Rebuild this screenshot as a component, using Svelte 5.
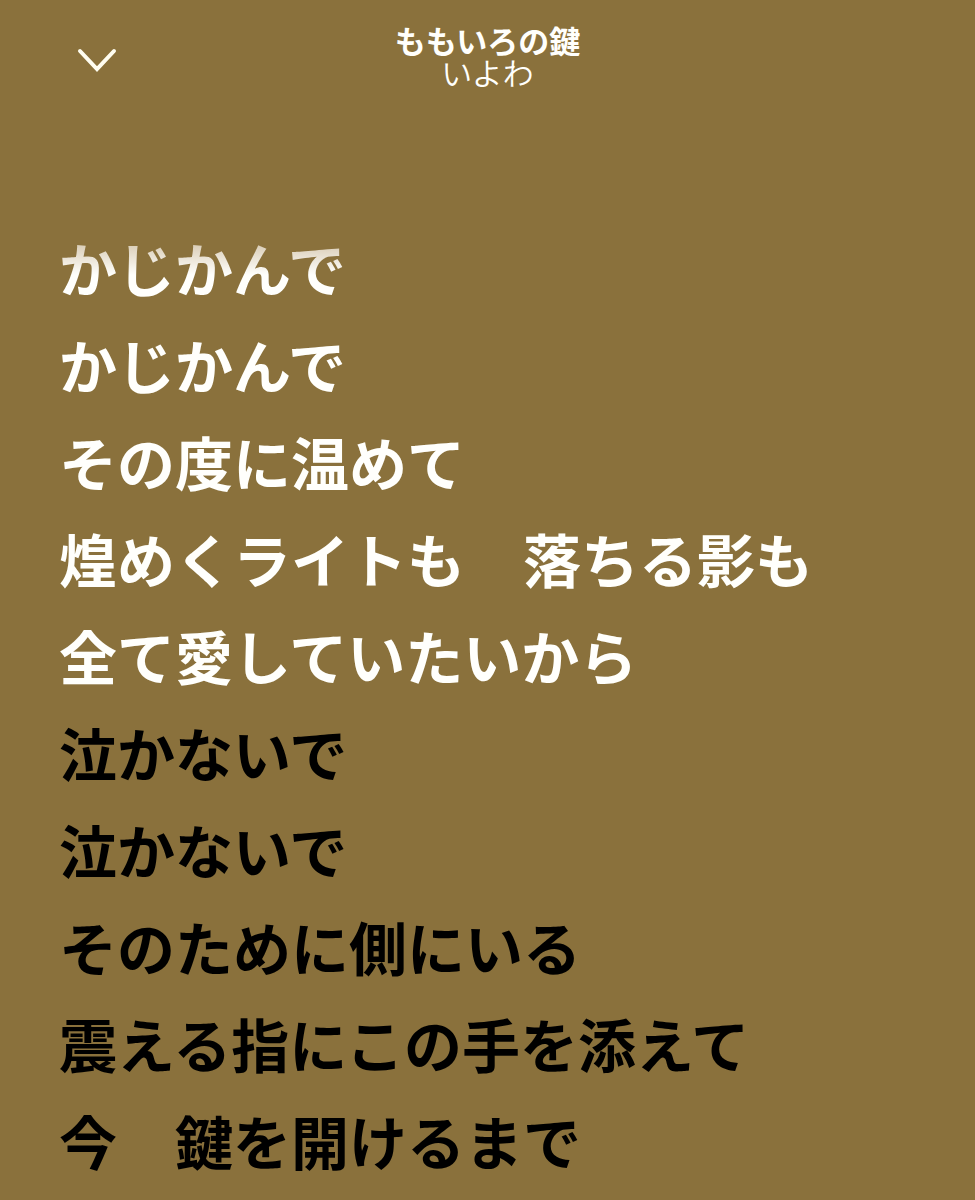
<script lang="ts">
  const title = 'ももいろの鍵';
  const artist = 'いよわ';

  const sung = [
    'かじかんで',
    'かじかんで',
    'その度に温めて',
    '煌めくライトも　落ちる影も',
    '全て愛していたいから',
  ];

  const upcoming = [
    '泣かないで',
    '泣かないで',
    'そのために側にいる',
    '震える指にこの手を添えて',
    '今　鍵を開けるまで',
  ];
</script>

<div class="lyrics-page">
  <header>
    <button class="close" aria-label="閉じる">
      <svg viewBox="0 0 40 24" width="40" height="24" aria-hidden="true">
        <path d="M3 3 L20 21 L37 3" />
      </svg>
    </button>
    <div class="track">
      <h1>{title}</h1>
      <p>{artist}</p>
    </div>
  </header>

  <main>
    {#each sung as line}
      <p class="line sung">{line}</p>
    {/each}
    {#each upcoming as line}
      <p class="line">{line}</p>
    {/each}
  </main>
</div>

<style>
  :global(body) {
    margin: 0;
    background-color: #8a713c;
  }

  .lyrics-page {
    height: 100vh;
    overflow: hidden;
    font-family: "Noto Sans CJK JP", sans-serif;
    color: #fffffc;
  }

  header {
    display: grid;
    grid-template-columns: 40px 1fr 40px;
    align-items: center;
    padding: 24px 77px 0;
  }

  .close {
    display: flex;
    margin-top: 8px;
    padding: 0;
    border: none;
    background: none;
    cursor: pointer;
  }

  .close path {
    fill: none;
    stroke: #fffdf0;
    stroke-width: 4;
    stroke-linecap: round;
  }

  .track {
    text-align: center;
  }

  h1,
  p {
    margin: 0;
  }

  h1 {
    font-size: 31px;
    line-height: 32px;
    font-weight: 700;
  }

  .track p {
    font-size: 31px;
    line-height: 32px;
    font-weight: 350;
  }

  main {
    margin-top: 131px;
    padding: 0 59px;
    color: #000000;
  }

  .line {
    font-size: 58px;
    line-height: 97px;
    font-weight: 700;
    white-space: nowrap;
  }

  .sung {
    color: #fffffc;
  }

  /* the top line fades out under the header */
  .sung:first-child {
    color: transparent;
    background: linear-gradient(#d8cbb4 24px, #fffffc 56px);
    background-clip: text;
  }
</style>
